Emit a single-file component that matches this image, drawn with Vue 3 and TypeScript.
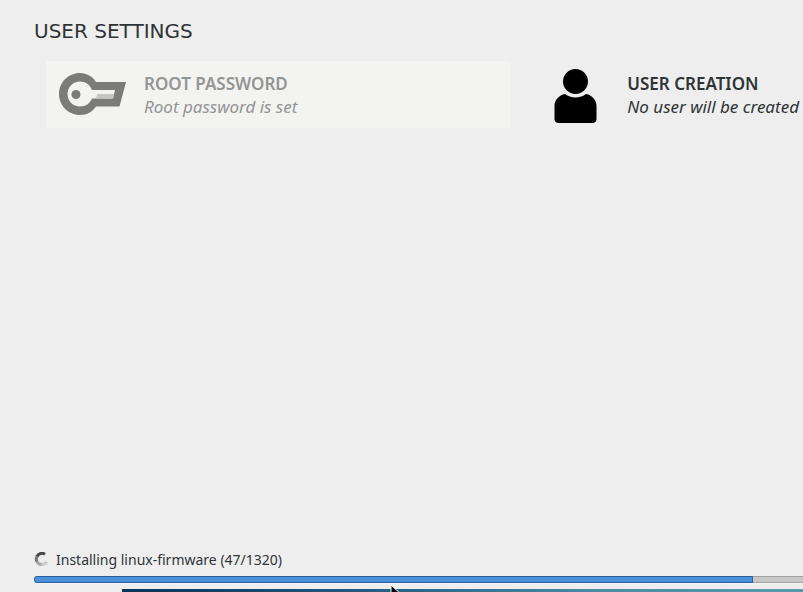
<script setup lang="ts">
const status = 'Installing linux-firmware (47/1320)'
const progress = 0.935
</script>

<template>
  <main class="hub">
    <section class="settings">
      <h1 class="heading">USER SETTINGS</h1>
      <div class="spokes">
        <button class="spoke spoke-set" type="button">
          <svg class="icon" viewBox="0 0 68 56" aria-hidden="true">
            <path
              fill="#7b7b79"
              fill-rule="evenodd"
              d="M21 6C9.500 6 0 15.300 0 27s9.500 21 21 21c7 0 12.500-3.300 16-8.500h23.500L67 15H37C33.500 9.500 28 6 21 6Zm0 8.500c5.700 0 9.800 3.200 12 8.500h23l-2 8.500H33c-2.200 5-6.300 8-12 8-7 0-12.500-5.500-12.500-12.500S14 14.500 21 14.500Z"
            />
            <path fill="#c5c5c3" d="M38.500 27h16.500L54 31.500H36.500Z" />
            <circle cx="17" cy="27.500" r="4.500" fill="#7b7b79" />
          </svg>
          <span class="labels">
            <span class="title">ROOT PASSWORD</span>
            <span class="note">Root password is set</span>
          </span>
        </button>
        <button class="spoke" type="button">
          <svg class="icon" viewBox="0 0 68 56" aria-hidden="true">
            <circle cx="33.500" cy="14.500" r="12.500" />
            <path
              d="M23 27C17 28 12.500 33 12.500 39V52Q12.500 56 17 56H50Q54.500 56 54.500 52V39C54.500 33 50 28 44 27C38.500 31.500 28.500 31.500 23 27Z"
            />
          </svg>
          <span class="labels">
            <span class="title">USER CREATION</span>
            <span class="note">No user will be created</span>
          </span>
        </button>
      </div>
    </section>

    <footer class="footer">
      <div class="status">
        <svg class="spinner" viewBox="0 0 16 16" aria-hidden="true">
          <g fill="none" stroke-width="3">
            <path stroke="#444746" d="M3 4.500A5.500 5.500 0 0 1 11 2.200" />
            <path stroke="#747675" d="M3.100 9.800A5.500 5.500 0 0 1 3 4.300" />
            <path stroke="#a3a5a4" d="M7.800 12.500A5.500 5.500 0 0 1 3 9.700" />
            <path stroke="#cbcccb" d="M12.700 9.700A5.500 5.500 0 0 1 7.700 12.500" />
          </g>
        </svg>
        <label for="install-progress">{{ status }}</label>
      </div>
      <progress id="install-progress" class="bar" :value="progress" max="1"></progress>
      <div class="banner">
        <svg class="pointer" viewBox="0 0 12 18" aria-hidden="true">
          <path fill="#000" stroke="#fff" d="M1 1V16L5 12L8 17L10 16L7 11H12Z" />
        </svg>
      </div>
    </footer>
  </main>
</template>

<style>
body {
  margin: 0;
  background: #eeeeee;
}
</style>

<style scoped>
.hub {
  box-sizing: border-box;
  display: flex;
  flex-direction: column;
  justify-content: space-between;
  height: 100vh;
  overflow: hidden;
  padding-top: 18px;
  background: #eeeeee;
  color: #2e3436;
  font-family: "Noto Sans", "Open Sans", sans-serif;
}

.heading {
  margin: 0 0 17px 34px;
  font-family: "DejaVu Sans", sans-serif;
  font-size: 20px;
  font-weight: 400;
  line-height: 26px;
}

.spokes {
  display: grid;
  grid-template-columns: 17fr 10fr;
  gap: 18px;
  padding-left: 46px;
}

.spoke {
  display: flex;
  align-items: center;
  gap: 17px;
  min-width: 0;
  height: 67px;
  padding: 0 0 0 13px;
  border: 0;
  background: transparent;
  color: inherit;
  font-family: inherit;
  text-align: left;
}

.spoke-set {
  background: #f3f3f1;
  color: #939594;
}

.icon {
  flex: none;
  width: 68px;
  height: 56px;
  overflow: visible;
}

.labels {
  display: grid;
  white-space: nowrap;
}

.title {
  font-size: 17px;
  font-weight: 600;
  line-height: 23px;
}

.note {
  font-size: 17px;
  font-style: italic;
  line-height: 23px;
}

.status {
  display: flex;
  align-items: center;
  gap: 6px;
  margin-bottom: 6px;
  padding-left: 34px;
  font-size: 14px;
  line-height: 20px;
}

.spinner {
  width: 16px;
  height: 16px;
}

.bar {
  display: block;
  width: calc(100% - 34px);
  height: 7px;
  margin-left: 34px;
  border: 0;
  border-radius: 3px 0 0 3px;
  overflow: hidden;
  appearance: none;
  background: #c8c8c8;
  box-shadow: 0 1px 0 #f6f6f6;
}

.bar::-webkit-progress-bar {
  background: #c8c8c8;
  box-shadow: inset 0 1px 0 #a1a1a1, inset 0 -1px 0 #a1a1a1;
}

.bar::-webkit-progress-value {
  box-sizing: border-box;
  border: 1px solid #265f9d;
  border-radius: 3px 0 0 3px;
  background: #4a90d9;
}

.banner {
  position: relative;
  height: 3px;
  margin: 6px 0 0 122px;
  background: linear-gradient(90deg, #063358, #245a82 35%, #498da3 70%, #5b9bac);
}

.pointer {
  position: absolute;
  top: -5px;
  left: 268px;
  width: 12px;
  height: 18px;
}
</style>
